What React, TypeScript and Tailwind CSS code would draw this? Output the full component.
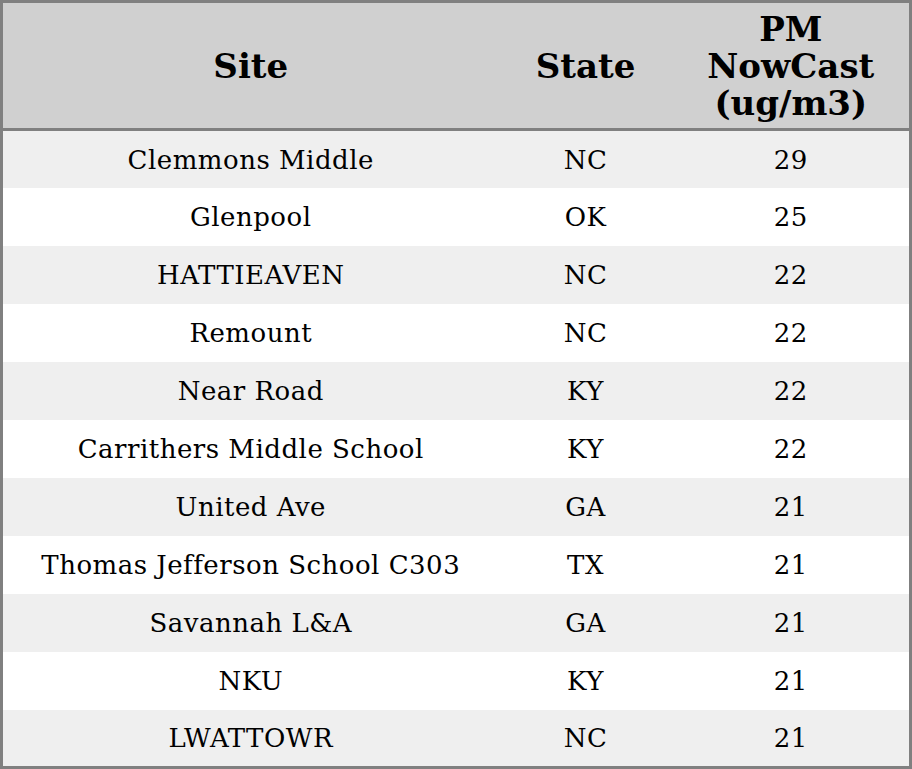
const rows = [
  ['Clemmons Middle', 'NC', '29'],
  ['Glenpool', 'OK', '25'],
  ['HATTIEAVEN', 'NC', '22'],
  ['Remount', 'NC', '22'],
  ['Near Road', 'KY', '22'],
  ['Carrithers Middle School', 'KY', '22'],
  ['United Ave', 'GA', '21'],
  ['Thomas Jefferson School C303', 'TX', '21'],
  ['Savannah L&A', 'GA', '21'],
  ['NKU', 'KY', '21'],
  ['LWATTOWR', 'NC', '21'],
]

export default function App() {
  return (
    <div className="w-[912px] h-[769px] bg-white font-['DejaVu_Serif',serif] text-black">
      <table className="w-[912px] border-collapse border-[3px] border-[#808080] table-fixed">
        <colgroup>
          <col className="w-[497px]" />
          <col className="w-[174px]" />
          <col />
        </colgroup>
        <thead>
          <tr className="bg-[#d0d0d0] border-b-[3px] border-[#808080] h-[128px]">
            <th className="text-[34px] font-bold leading-[37px] pt-[2px]">Site</th>
            <th className="text-[34px] font-bold leading-[37px] pt-[2px]">State</th>
            <th className="text-[34px] font-bold leading-[37px] px-[20px] pt-[2px]">PM NowCast (ug/m3)</th>
          </tr>
        </thead>
        <tbody>
          {rows.map((r, i) => (
            <tr key={i} className={i % 2 === 0 ? 'bg-[#efefef] h-[58px]' : 'bg-white h-[58px]'}>
              <td className="text-center text-[26px] tracking-[0.5px] pt-[2px]">{r[0]}</td>
              <td className="text-center text-[26px] tracking-[0.5px] pt-[2px]">{r[1]}</td>
              <td className="text-center text-[26px] tracking-[0.5px] pt-[2px]">{r[2]}</td>
            </tr>
          ))}
        </tbody>
      </table>
    </div>
  )
}
